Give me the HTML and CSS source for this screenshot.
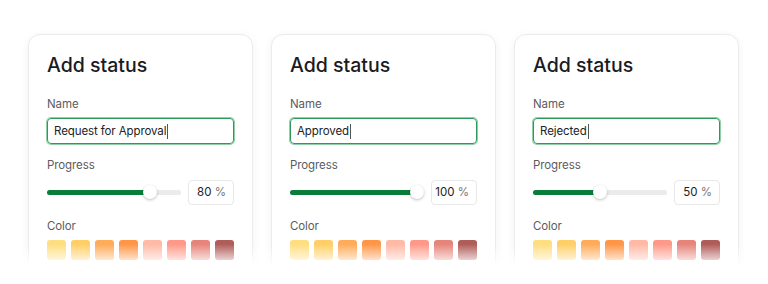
FILE: index.html
```html
<!DOCTYPE html>
<html>
<head>
    <title>Add status</title>
    <link rel="stylesheet" href="styles.css">
</head>
<body>
    <div class="cards">
        <div class="card">
            <h2>Add status</h2>
            <div class="field">
                <label>Name</label>
                <div class="input">Request for Approval<span class="caret"></span></div>
            </div>
            <div class="field">
                <label>Progress</label>
                <div class="progress">
                    <div class="track" style="--p: 0.8">
                        <div class="fill"></div>
                        <div class="thumb"></div>
                    </div>
                    <div class="number">80 <span class="unit">%</span></div>
                </div>
            </div>
            <div class="field">
                <label>Color</label>
                <div class="swatches">
                    <span class="swatch c1"></span><span class="swatch c2"></span><span class="swatch c3"></span><span class="swatch c4"></span>
                    <span class="swatch c5"></span><span class="swatch c6"></span><span class="swatch c7"></span><span class="swatch c8"></span>
                </div>
            </div>
        </div>

        <div class="card">
            <h2>Add status</h2>
            <div class="field">
                <label>Name</label>
                <div class="input">Approved<span class="caret"></span></div>
            </div>
            <div class="field">
                <label>Progress</label>
                <div class="progress">
                    <div class="track" style="--p: 1">
                        <div class="fill"></div>
                        <div class="thumb"></div>
                    </div>
                    <div class="number">100 <span class="unit">%</span></div>
                </div>
            </div>
            <div class="field">
                <label>Color</label>
                <div class="swatches">
                    <span class="swatch c1"></span><span class="swatch c2"></span><span class="swatch c3"></span><span class="swatch c4"></span>
                    <span class="swatch c5"></span><span class="swatch c6"></span><span class="swatch c7"></span><span class="swatch c8"></span>
                </div>
            </div>
        </div>

        <div class="card">
            <h2>Add status</h2>
            <div class="field">
                <label>Name</label>
                <div class="input">Rejected<span class="caret"></span></div>
            </div>
            <div class="field">
                <label>Progress</label>
                <div class="progress">
                    <div class="track" style="--p: 0.5">
                        <div class="fill"></div>
                        <div class="thumb"></div>
                    </div>
                    <div class="number">50 <span class="unit">%</span></div>
                </div>
            </div>
            <div class="field">
                <label>Color</label>
                <div class="swatches">
                    <span class="swatch c1"></span><span class="swatch c2"></span><span class="swatch c3"></span><span class="swatch c4"></span>
                    <span class="swatch c5"></span><span class="swatch c6"></span><span class="swatch c7"></span><span class="swatch c8"></span>
                </div>
            </div>
        </div>
    </div>
    <div class="fade"></div>
</body>
</html>
```

FILE: styles.css
```css
body {
    font-family: Inter, "Noto Sans", sans-serif;
    background-color: #fff;
    margin: 0;
    padding: 0;
    height: 284px;
    overflow: hidden;
    position: relative;
}
.cards {
    display: flex;
    gap: 18px;
    padding: 34px 0 0 28px;
}
.card {
    width: 225px;
    height: 300px;
    box-sizing: border-box;
    padding: 18px 18px 0 18px;
    background-color: #fff;
    border: 1px solid #ebebeb;
    border-radius: 12px;
    box-shadow: 0 2px 8px rgba(0, 0, 0, 0.06);
}
h2 {
    margin: 0 0 19px 0;
    font-size: 19.5px;
    line-height: 24px;
    font-weight: 500;
    color: #1b1b1f;
}
.field {
    margin-bottom: 13px;
}
label {
    display: block;
    font-size: 11.5px;
    line-height: 16px;
    letter-spacing: -0.1px;
    color: #5c5c60;
    margin-bottom: 6px;
}
.input {
    height: 26px;
    box-sizing: border-box;
    border: 1px solid #2e9a5a;
    box-shadow: 0 0 0 1px #8fd0a8;
    border-radius: 4px;
    padding: 0 6px;
    font-size: 11.5px;
    letter-spacing: -0.1px;
    line-height: 24px;
    color: #222;
    display: flex;
    align-items: center;
}
.caret {
    display: inline-block;
    width: 1px;
    height: 15px;
    background-color: #555;
    margin-left: 1px;
}
.progress {
    display: flex;
    align-items: center;
    gap: 7px;
    height: 26px;
}
.track {
    flex: 1;
    height: 5px;
    background-color: #ebebeb;
    border-radius: 3px;
    position: relative;
}
.fill {
    height: 100%;
    width: calc(7px + (100% - 14px) * var(--p));
    background-color: #0b7d3b;
    border-radius: 3px;
}
.thumb {
    position: absolute;
    top: -4.5px;
    left: calc((100% - 14px) * var(--p));
    width: 14px;
    height: 14px;
    border-radius: 50%;
    background-color: #fff;
    box-shadow: 0 1px 3px rgba(0, 0, 0, 0.25);
}
.number {
    width: 46px;
    height: 25px;
    box-sizing: border-box;
    border: 1px solid #e8e8e8;
    border-radius: 4px;
    padding-right: 7px;
    font-size: 11.5px;
    line-height: 23px;
    text-align: right;
    color: #222;
}
.unit {
    color: #777;
}
.swatches {
    display: flex;
    gap: 5px;
}
.swatch {
    width: 19px;
    height: 20px;
    border-radius: 3px;
}
.c1 { background-color: #ffde80; }
.c2 { background-color: #ffcf66; }
.c3 { background-color: #ffab58; }
.c4 { background-color: #ff9646; }
.c5 { background-color: #ffb9a6; }
.c6 { background-color: #ff9888; }
.c7 { background-color: #e6847a; }
.c8 { background-color: #b05c58; }
.fade {
    position: absolute;
    left: 0;
    right: 0;
    bottom: 0;
    height: 40px;
    background: linear-gradient(rgba(255, 255, 255, 0), #fff 22px);
}
```
